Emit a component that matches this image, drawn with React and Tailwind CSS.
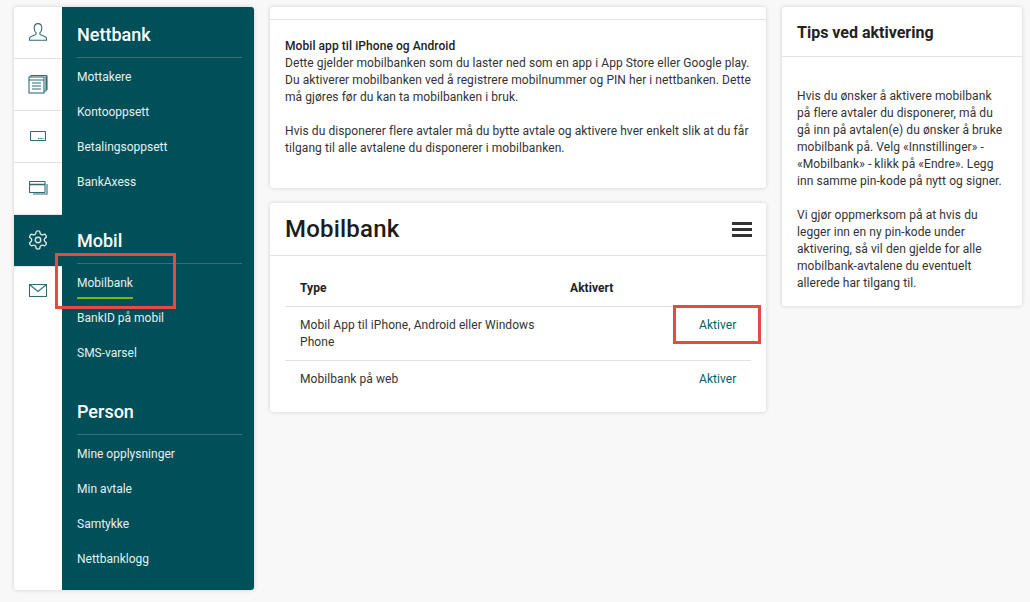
const sections = [
  { title: "Nettbank", links: ["Mottakere", "Kontooppsett", "Betalingsoppsett", "BankAxess"] },
  { title: "Mobil", links: ["Mobilbank", "BankID på mobil", "SMS-varsel"] },
  { title: "Person", links: ["Mine opplysninger", "Min avtale", "Samtykke", "Nettbanklogg"] },
];

const UserIcon = () => (
  <svg width="20" height="20" viewBox="0 0 20 20" fill="none" stroke="currentColor" strokeWidth="1.1">
    <path d="M6.2 6.2C6.2 3.4 7.8 1.6 10 1.6s3.8 1.8 3.8 4.6c0 2-.9 3.7-1.9 4.6v1.5c0 .7 5.6 1.6 6.6 3.6v2.3H1.5v-2.3c1-2 6.6-2.9 6.6-3.6v-1.5c-1-.9-1.9-2.6-1.9-4.6z" />
  </svg>
);

const AccountsIcon = () => (
  <svg width="20" height="20" viewBox="0 0 20 20" fill="none" stroke="currentColor" strokeWidth="1.1">
    <rect x="1" y="3" width="15" height="16" />
    <path d="M1 6h15M4 9h9M4 12h9M4 15h9" />
    <path d="M3 3V1.5h15V17h-2M18 2h1v14" />
  </svg>
);

const PaymentIcon = () => (
  <svg width="16" height="10" viewBox="0 0 16 10" fill="none" stroke="currentColor" strokeWidth="1.1">
    <rect x="0.5" y="0.5" width="15" height="9" rx="0.5" />
    <path d="M8 7.5h5.5" strokeDasharray="1 0.6" />
  </svg>
);

const CardIcon = () => (
  <svg width="19" height="14" viewBox="0 0 19 14" fill="none" stroke="currentColor" strokeWidth="1.1">
    <rect x="0.5" y="0.5" width="15.5" height="11" rx="0.5" />
    <path d="M0.5 3.5H16" strokeWidth="1.6" />
    <path d="M18 3v10H4" />
  </svg>
);

const GearIcon = () => (
  <svg width="22" height="22" viewBox="0 0 24 24" fill="none" stroke="currentColor" strokeWidth="1.5" strokeLinecap="round" strokeLinejoin="round">
    <path d="M12.22 2h-.44a2 2 0 0 0-2 2v.18a2 2 0 0 1-1 1.73l-.43.25a2 2 0 0 1-2 0l-.15-.08a2 2 0 0 0-2.73.73l-.22.38a2 2 0 0 0 .73 2.73l.15.1a2 2 0 0 1 1 1.72v.51a2 2 0 0 1-1 1.74l-.15.09a2 2 0 0 0-.73 2.73l.22.38a2 2 0 0 0 2.73.73l.15-.08a2 2 0 0 1 2 0l.43.25a2 2 0 0 1 1 1.73V20a2 2 0 0 0 2 2h.44a2 2 0 0 0 2-2v-.18a2 2 0 0 1 1-1.73l.43-.25a2 2 0 0 1 2 0l.15.08a2 2 0 0 0 2.73-.73l.22-.39a2 2 0 0 0-.73-2.73l-.15-.08a2 2 0 0 1-1-1.74v-.5a2 2 0 0 1 1-1.74l.15-.09a2 2 0 0 0 .73-2.73l-.22-.38a2 2 0 0 0-2.73-.73l-.15.08a2 2 0 0 1-2 0l-.43-.25a2 2 0 0 1-1-1.73V4a2 2 0 0 0-2-2z" />
    <circle cx="12" cy="12" r="3" />
  </svg>
);

const MailIcon = () => (
  <svg width="18" height="13" viewBox="0 0 18 13" fill="none" stroke="currentColor" strokeWidth="1.1">
    <rect x="0.5" y="0.5" width="17" height="12" />
    <path d="M0.5 0.5 9 7.5l8.5-7" />
  </svg>
);

const HamburgerIcon = () => (
  <svg width="20" height="15" viewBox="0 0 20 15" fill="#333">
    <rect width="20" height="3" />
    <rect y="6" width="20" height="3" />
    <rect y="12" width="20" height="3" />
  </svg>
);

const iconRows = [
  { icon: <UserIcon />, cls: "h-[52px] border-b border-[#e2e2e2]" },
  { icon: <AccountsIcon />, cls: "h-[52px] border-b border-[#e2e2e2]" },
  { icon: <PaymentIcon />, cls: "h-[52px] border-b border-[#e2e2e2]" },
  { icon: <CardIcon />, cls: "h-[52px] border-b border-[#e2e2e2]" },
  { icon: <GearIcon />, cls: "h-[51px] bg-[#004f59] !text-[#d5e6e6]" },
  { icon: <MailIcon />, cls: "h-[50px] border-t border-[#e2e2e2]" },
];

const Card = ({ className, children }) => (
  <div className={`bg-white rounded-[3px] shadow-[0_0_4px_rgba(0,0,0,0.16)] ${className}`}>{children}</div>
);

export default function App() {
  return (
    <div className="relative flex w-[1030px] h-[602px] overflow-hidden bg-[#f8f8f8] pl-[14px] pt-[7px] text-[12px] leading-[17px] text-[#333] font-['Roboto',sans-serif]">
      <Card className="flex w-[240px] h-[583px] overflow-hidden shrink-0">
        <div className="w-[48px] shrink-0">
          {iconRows.map((row, i) => (
            <div key={i} className={`flex items-center justify-center pb-[2px] text-[#2f6d76] ${row.cls}`}>
              {row.icon}
            </div>
          ))}
        </div>
        <div className="flex-1 bg-[#004f59] pl-[15px] pr-[12px] text-white">
          {sections.map((section, i) => (
            <div key={section.title} className={i === 0 ? "" : "mt-[13px]"}>
              <div className="h-[51px] mb-[2px] flex items-end border-b border-[#3c7079] pb-[10px] text-[18px] leading-[24px] font-medium">
                {section.title}
              </div>
              {section.links.map((link) => (
                <div key={link} className="h-[35px] flex items-center text-[#e6f0f0]">
                  <span className={link === "Mobilbank" ? "relative" : ""}>
                    {link}
                    {link === "Mobilbank" && (
                      <span className="absolute left-0 right-0 top-[22px] h-[2px] bg-[#7fb800]" />
                    )}
                  </span>
                </div>
              ))}
            </div>
          ))}
        </div>
      </Card>

      <div className="w-[496px] ml-[16px] shrink-0 tracking-[0.07px]">
        <Card className="h-[181px]">
          <div className="h-[13px] border-b border-[#e2e2e2]" />
          <div className="px-[15px] pt-[18px]">
            <p className="font-medium text-[#222]">Mobil app til iPhone og Android</p>
            <p>
              Dette gjelder mobilbanken som du laster ned som en app i App Store eller Google play.
              Du aktiverer mobilbanken ved å registrere mobilnummer og PIN her i nettbanken. Dette
              må gjøres før du kan ta mobilbanken i bruk.
            </p>
            <p className="mt-[17px]">
              Hvis du disponerer flere avtaler må du bytte avtale og aktivere hver enkelt slik at du
              får tilgang til alle avtalene du disponerer i mobilbanken.
            </p>
          </div>
        </Card>

        <Card className="h-[209px] mt-[15px]">
          <div className="h-[53px] flex items-center justify-between border-b border-[#e2e2e2] pl-[15px] pr-[14px]">
            <h1 className="text-[24px] tracking-[0.2px] font-medium text-[#1c1c1c]">Mobilbank</h1>
            <HamburgerIcon />
          </div>
          <div className="mx-[15px] w-[466px]">
            <div className="flex h-[51px] items-end border-b border-[#e2e2e2] pb-[9px] pl-[15px] font-bold text-[#222]">
              <span className="w-[270px]">Type</span>
              <span>Aktivert</span>
            </div>
            <div className="flex h-[54px] items-start border-b border-[#e2e2e2] pt-[10px] pl-[15px]">
              <span className="w-[399px] pr-[150px]">Mobil App til iPhone, Android eller Windows Phone</span>
              <span className="text-[#00606b]">Aktiver</span>
            </div>
            <div className="flex h-[37px] items-center pl-[15px]">
              <span className="w-[399px]">Mobilbank på web</span>
              <span className="text-[#00606b]">Aktiver</span>
            </div>
          </div>
        </Card>
      </div>

      <Card className="w-[240px] h-[299px] ml-[16px] shrink-0 tracking-[0.07px]">
        <div className="h-[50px] flex items-center border-b border-[#e2e2e2] px-[15px] pt-[2px] text-[16px] font-bold tracking-normal text-[#222]">
          Tips ved aktivering
        </div>
        <div className="pl-[15px] pr-[18px] pt-[31px]">
          <p>
            Hvis du ønsker å aktivere mobilbank på flere avtaler du disponerer, må du gå inn på
            avtalen(e) du ønsker å bruke mobilbank på. Velg «Innstillinger» - «Mobilbank» - klikk på
            «Endre». Legg inn samme pin-kode på nytt og signer.
          </p>
          <p className="mt-[17px]">
            Vi gjør oppmerksom på at hvis du legger inn en ny pin-kode under aktivering, så vil den
            gjelde for alle mobilbank-avtalene du eventuelt allerede har tilgang til.
          </p>
        </div>
      </Card>

      {/* red annotation boxes on top of the screenshot */}
      <div className="absolute left-[55px] top-[253px] w-[121px] h-[56px] border-[3px] border-[#e64a45]" />
      <div className="absolute left-[673px] top-[305px] w-[88px] h-[39px] border-[3px] border-[#e64a45]" />
    </div>
  );
}
